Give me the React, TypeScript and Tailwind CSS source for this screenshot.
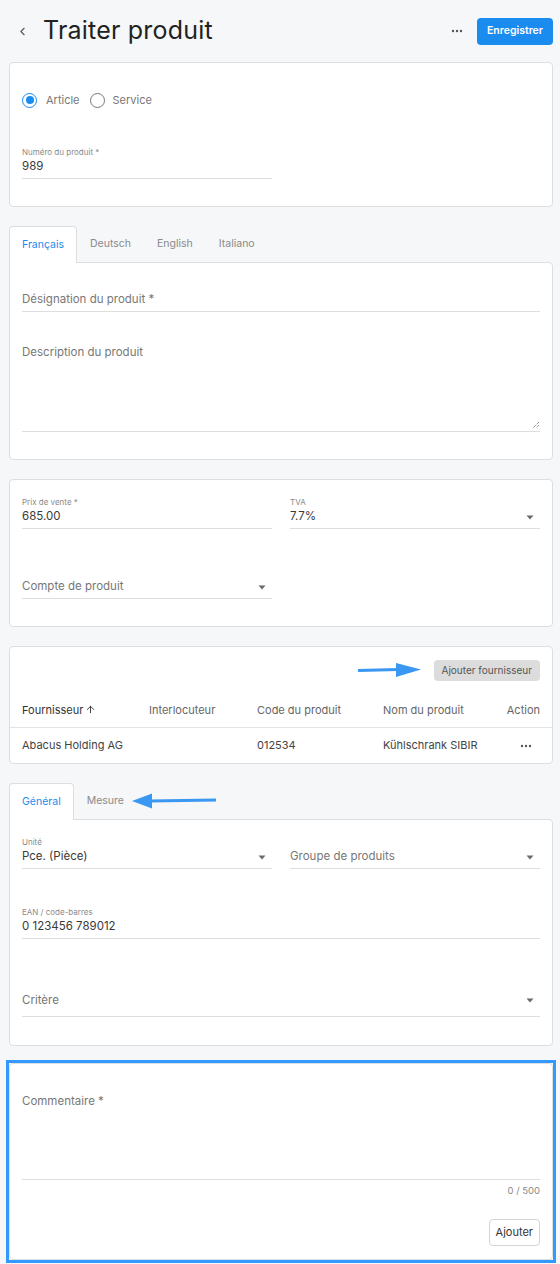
import { ChevronLeft, ArrowUp } from 'lucide-react'

const font = { fontFamily: 'Inter, "Noto Sans", sans-serif' }

function Caret() {
  return (
    <svg width="8" height="5" viewBox="0 0 8 5" className="shrink-0">
      <path d="M0.5 0.5h7L4 4.5z" fill="#6b6b6b" />
    </svg>
  )
}

function Dots() {
  return (
    <svg width="12" height="4" viewBox="0 0 12 4">
      <circle cx="2" cy="2" r="1.2" fill="#555" />
      <circle cx="6" cy="2" r="1.2" fill="#555" />
      <circle cx="10" cy="2" r="1.2" fill="#555" />
    </svg>
  )
}

// champ avec petit label au-dessus
function Field({ label, value, select }: { label: string; value: string; select?: boolean }) {
  return (
    <div className="flex flex-col">
      <span className="text-[8px] leading-[12px] text-[#8a8a8a]">{label}</span>
      <div className="flex items-center justify-between h-[21px] border-b border-[#dedede] pb-[2px] pr-[6px]">
        <span className="text-[11.5px] text-[#3a3a3a]">{value}</span>
        {select && <Caret />}
      </div>
    </div>
  )
}

// champ vide (placeholder)
function Empty({ label, select, h = 'h-[21px]' }: { label: string; select?: boolean; h?: string }) {
  return (
    <div className={`flex items-center justify-between border-b border-[#dedede] pb-[2px] pr-[6px] ${h}`}>
      <span className="text-[11.5px] text-[#777]">{label}</span>
      {select && <Caret />}
    </div>
  )
}

function Tabs({ items }: { items: string[] }) {
  return (
    <div className="flex h-[36px] items-stretch relative z-10">
      {items.map((t, i) =>
        i === 0 ? (
          <div
            key={t}
            className="px-[12px] h-[37px] flex items-center bg-white border border-b-0 border-[#dcdfe2] rounded-t-[4px] text-[10.5px] text-[#1a8cf0]"
          >
            {t}
          </div>
        ) : (
          <div key={t} className="px-[13px] flex items-center text-[10.5px] text-[#8a8a8a]">
            {t}
          </div>
        )
      )}
    </div>
  )
}

export default function App() {
  return (
    <div style={font} className="min-h-[1264px] w-[560px] bg-[#f6f7f8] text-[#333] pb-[1px]">
      {/* header */}
      <div className="flex items-center h-[62px] pl-[16px] pr-[7px]">
        <ChevronLeft className="w-[13px] h-[13px] text-[#555]" strokeWidth={2} />
        <h1 className="ml-[14px] text-[25px] font-normal text-[#222] tracking-[0.2px]">Traiter produit</h1>
        <div className="ml-auto flex items-center gap-[14px]">
          <Dots />
          <button className="h-[27px] px-[10px] rounded-[4px] bg-[#1a8cf0] text-white text-[10.5px] font-semibold">
            Enregistrer
          </button>
        </div>
      </div>

      <div className="pl-[9px] pr-[7px] flex flex-col">
        {/* type + numéro */}
        <div className="bg-white border border-[#dcdfe2] rounded-[4px] h-[145px] px-[12px] pt-[29px]">
          <div className="flex items-center h-[16px] gap-[10px]">
            <div className="flex items-center gap-[9px]">
              <span className="w-[15px] h-[15px] rounded-full border-[1.5px] border-[#1a8cf0] flex items-center justify-center">
                <span className="w-[8px] h-[8px] rounded-full bg-[#1a8cf0]" />
              </span>
              <span className="text-[11px] text-[#777]">Article</span>
            </div>
            <div className="flex items-center gap-[8px]">
              <span className="w-[15px] h-[15px] rounded-full border-[1.5px] border-[#777]" />
              <span className="text-[11px] text-[#777]">Service</span>
            </div>
          </div>
          <div className="w-[250px] mt-[38px]">
            <Field label="Numéro du produit *" value="989" />
          </div>
        </div>

        {/* désignation */}
        <div className="mt-[19px]">
          <Tabs items={['Français', 'Deutsch', 'English', 'Italiano']} />
          <div className="bg-white border border-[#dcdfe2] rounded-[4px] rounded-tl-none h-[198px] px-[12px] pt-[28px]">
            <Empty label="Désignation du produit *" />
            <div className="mt-[26px] h-[94px] border-b border-[#dedede] relative">
              <span className="text-[11.5px] text-[#777]">Description du produit</span>
              <svg width="8" height="8" viewBox="0 0 8 8" className="absolute right-0 bottom-[2px]">
                <path d="M7 1L1 7M7 4L4 7" stroke="#555" strokeWidth="0.9" strokeDasharray="1 1" />
              </svg>
            </div>
          </div>
        </div>

        {/* prix */}
        <div className="mt-[19px] bg-white border border-[#dcdfe2] rounded-[4px] h-[148px] px-[12px] pt-[16px]">
          <div className="grid grid-cols-2 gap-x-[18px]">
            <Field label="Prix de vente *" value="685.00" />
            <Field label="TVA" value="7.7%" select />
          </div>
          <div className="w-[250px] mt-[49px]">
            <Empty label="Compte de produit" select />
          </div>
        </div>

        {/* fournisseurs */}
        <div className="mt-[19px] bg-white border border-[#dcdfe2] rounded-[4px] h-[118px]">
          <div className="flex justify-end items-center px-[12px] pt-[12px] h-[34px]">
            <svg width="64" height="16" viewBox="0 0 64 16" className="mr-[12px]">
              <path d="M0 8.5 L40 7.5" stroke="#3a97f2" strokeWidth="3" />
              <path d="M38 1 L63 7.5 L38 15 Z" fill="#3a97f2" />
            </svg>
            <button className="h-[21px] px-[8px] rounded-[4px] bg-[#dcdcdc] text-[10px] text-[#555]">
              Ajouter fournisseur
            </button>
          </div>
          <div className="grid grid-cols-[127px_108px_126px_1fr_auto] px-[12px] h-[47px] items-end pb-[9px] border-b border-[#e3e3e3] text-[11px]">
            <span className="flex items-center gap-[2px] text-[#333]">
              Fournisseur <ArrowUp className="w-[11px] h-[11px]" strokeWidth={2} />
            </span>
            <span className="text-[#666]">Interlocuteur</span>
            <span className="text-[#666]">Code du produit</span>
            <span className="text-[#666]">Nom du produit</span>
            <span className="text-[#666]">Action</span>
          </div>
          <div className="grid grid-cols-[127px_108px_126px_1fr_auto] px-[12px] h-[35px] items-center text-[11px] text-[#444]">
            <span className="whitespace-nowrap">Abacus Holding AG</span>
            <span />
            <span>012534</span>
            <span>Kühlschrank SIBIR</span>
            <span className="pr-[8px]">
              <Dots />
            </span>
          </div>
        </div>

        {/* général */}
        <div className="mt-[19px]">
          <div className="flex items-center">
            <Tabs items={['Général', 'Mesure']} />
            <svg width="84" height="18" viewBox="0 0 84 18" className="-ml-[5px] relative z-10">
              <path d="M18 9 L84 8" stroke="#3a97f2" strokeWidth="3" />
              <path d="M0 9 L20 1.5 L20 16.5 Z" fill="#3a97f2" />
            </svg>
          </div>
          <div className="bg-white border border-[#dcdfe2] rounded-[4px] rounded-tl-none h-[227px] px-[12px] pt-[16px]">
            <div className="grid grid-cols-2 gap-x-[18px] items-end">
              <Field label="Unité" value="Pce. (Pièce)" select />
              <Empty label="Groupe de produits" select />
            </div>
            <div className="mt-[37px]">
              <Field label="EAN / code-barres" value="0 123456 789012" />
            </div>
            <div className="mt-[48px]">
              <Empty label="Critère" select h="h-[30px]" />
            </div>
          </div>
        </div>
      </div>

      {/* commentaire */}
      <div className="mt-[14px] ml-[6px] mr-[4px] border-[3px] border-[#3399ff]">
        <div className="bg-white border border-[#dcdfe2] rounded-[4px] h-[197px] px-[12px] pt-[29px] flex flex-col">
          <span className="text-[11.5px] text-[#777]">Commentaire *</span>
          <div className="h-[70px] border-b border-[#dedede]" />
          <span className="self-end mt-[4px] text-[9.5px] text-[#888]">0 / 500</span>
          <button className="self-end mt-[20px] h-[27px] px-[6px] rounded-[4px] border border-[#d5d5d5] bg-white text-[11px] text-[#333]">
            Ajouter
          </button>
        </div>
      </div>
    </div>
  )
}
